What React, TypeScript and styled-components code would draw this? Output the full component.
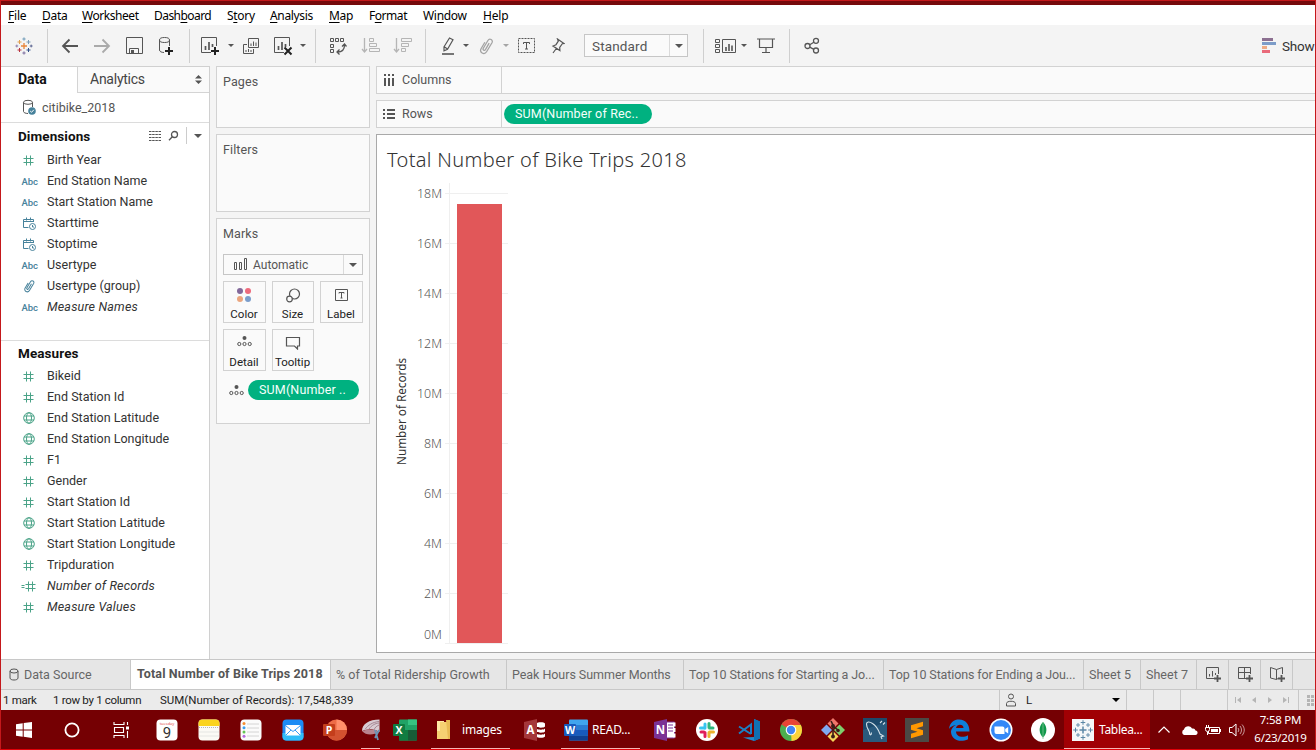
import React from "react";
import styled, { createGlobalStyle } from "styled-components";

const UI = '"Roboto", "Liberation Sans", sans-serif';
const SYS = '"Noto Sans", "Open Sans", sans-serif';

const GlobalStyle = createGlobalStyle`
  html, body { margin: 0; padding: 0; overflow: hidden; }
  * { box-sizing: border-box; }
  svg { display: block; flex: none; }
`;

/* ---------- window ---------- */
const Window = styled.div`
  width: 1316px;
  height: 750px;
  display: flex;
  flex-direction: column;
  overflow: hidden;
  background: #f4f4f4;
  border: 1px solid #c4181b;
  border-bottom-color: #e00008;
  font-family: ${UI};
  color: #333;
  white-space: nowrap;
`;
const TitleStrip = styled.div`
  height: 4px;
  flex: none;
  background: #760a0c;
`;
const MenuBar = styled.nav`
  height: 20px;
  flex: none;
  background: #fff;
  display: flex;
  align-items: center;
  padding: 1px 0 0 7px;
  font: 12px ${SYS};
  color: #000;
`;
const MenuItem = styled.span<{ $w: number; $ls?: number }>`
  width: ${(p) => p.$w}px;
  letter-spacing: ${(p) => p.$ls ?? -0.2}px;
  u { text-underline-offset: 2px; }
`;

/* ---------- toolbar ---------- */
const Toolbar = styled.div`
  height: 41px;
  flex: none;
  display: flex;
  align-items: center;
  background: #f4f4f4;
`;
const Slot = styled.div<{ $w: number; $dim?: boolean }>`
  width: ${(p) => p.$w}px;
  height: 100%;
  flex: none;
  display: flex;
  align-items: center;
  justify-content: center;
  opacity: ${(p) => (p.$dim ? 0.5 : 1)};
`;
const Separator = styled.i<{ $l: number; $r: number }>`
  width: 1px;
  height: 34px;
  flex: none;
  background: #cfcfcf;
  margin: 0 ${(p) => p.$r}px 0 ${(p) => p.$l}px;
`;
const Caret = styled.i<{ $size?: number }>`
  border: ${(p) => p.$size ?? 3}px solid transparent;
  border-top-color: #555;
  border-bottom-width: 0;
`;
const Select = styled.div<{ $h: number }>`
  height: ${(p) => p.$h}px;
  flex: none;
  display: flex;
  align-items: center;
  border: 1px solid #c6c6c6;
  background: #fafafa;
  color: #555;
`;
const FitSelect = styled(Select)`
  width: 104px;
  margin: 0 15px 0 12px;
  font-size: 13.5px;
  letter-spacing: 0.15px;
  padding: 0 0 0 7px;
`;
const SelectButton = styled.span<{ $w: number }>`
  width: ${(p) => p.$w}px;
  height: 100%;
  margin-left: auto;
  display: flex;
  align-items: center;
  justify-content: center;
  border-left: 1px solid #dadada;
`;
const ShowMe = styled.div`
  display: flex;
  flex: none;
  align-items: center;
  gap: 6px;
  margin-left: 433px;
  font-size: 13.5px;
  letter-spacing: -0.2px;
  color: #333;
`;

/* ---------- workspace ---------- */
const Workspace = styled.div`
  height: 593px;
  flex: none;
  display: flex;
`;
const DataPane = styled.aside`
  width: 209px;
  flex: none;
  background: #fff;
  border-right: 1px solid #d0d0d0;
  border-top: 1px solid #d0d0d0;
`;
const PaneTabs = styled.div`
  display: flex;
  height: 26px;
`;
const DataTab = styled.div`
  width: 76px;
  padding: 3px 0 0 17px;
  font: bold 14px/18px ${UI};
  letter-spacing: 0;
  color: #111;
`;
const AnalyticsTab = styled.div`
  flex: 1;
  display: flex;
  align-items: center;
  justify-content: space-between;
  padding: 0 7px 1px 12px;
  border-left: 1px solid #d4d4d4;
  border-bottom: 1px solid #d4d4d4;
  background: #fafafa;
  font-size: 14px;
  letter-spacing: -0.25px;
  color: #444;
`;
const DataSourceRow = styled.div`
  height: 30px;
  display: flex;
  align-items: center;
  gap: 5px;
  padding: 0 0 1px 21px;
  border-bottom: 1px solid #dcdcdc;
  font-size: 12.5px;
  color: #555;
`;
const FieldSection = styled.section<{ $h: number }>`
  height: ${(p) => p.$h}px;
  border-bottom: 1px solid #dcdcdc;
  &:last-child { border: 0; }
`;
const SectionHead = styled.header<{ $h: number }>`
  height: ${(p) => p.$h}px;
  display: flex;
  align-items: center;
  padding: 0 7px 1px 17px;
  font-size: 13.5px;
  font-weight: bold;
  letter-spacing: 0.08px;
  color: #111;
`;
const HeadTools = styled.div`
  display: flex;
  align-items: center;
  gap: 7px;
  margin-left: auto;
`;
const HeadRule = styled.i`
  width: 1px;
  height: 17px;
  background: #ccc;
`;
const Field = styled.div<{ $italic?: boolean }>`
  height: 21px;
  display: flex;
  align-items: center;
  font-size: 12.5px;
  font-style: ${(p) => (p.$italic ? "italic" : "normal")};
  letter-spacing: ${(p) => (p.$italic ? 0.18 : 0)}px;
  color: #333;
`;
const FieldIcon = styled.span`
  width: 46px;
  display: flex;
  justify-content: center;
  padding: 1px 0 0 9px;
  font: 500 9.5px ${UI};
  letter-spacing: 0;
  color: #47829b;
`;
const Cards = styled.div`
  width: 166px;
  flex: none;
  padding: 0 6px;
  display: flex;
  flex-direction: column;
  gap: 6px;
`;
const Card = styled.section<{ $h: number }>`
  height: ${(p) => p.$h}px;
  flex: none;
  background: #fafafa;
  border: 1px solid #d2d2d2;
  padding: 7px 6px;
`;
const CardTitle = styled.h2`
  margin: 0;
  font: 12.5px/15px ${UI};
  letter-spacing: 0.1px;
  color: #555;
`;
const MarkSelect = styled(Select)`
  margin-top: 13px;
  padding-left: 9px;
  gap: 6px;
  font-size: 12px;
`;
const MarkGrid = styled.div`
  display: grid;
  grid-template-columns: 43px 42px 43px;
  grid-auto-rows: 42px;
  gap: 6px;
  margin-top: 6px;
`;
const MarkButton = styled.div`
  border: 1px solid #d2d2d2;
  display: flex;
  flex-direction: column;
  align-items: center;
  justify-content: space-between;
  padding: 5px 1px 1px 0;
  font-size: 11.5px;
  line-height: 14px;
  color: #222;
`;
const Pill = styled.span<{ $w: number }>`
  width: ${(p) => p.$w}px;
  height: 20px;
  border-radius: 10px;
  background: #00b180;
  color: #f5fffb;
  font: 12.5px/20px ${UI};
  letter-spacing: 0.15px;
  padding-left: 11px;
`;
const DetailRow = styled.div`
  display: flex;
  align-items: center;
  gap: 4px;
  margin: 9px 0 0 6px;
`;
const Main = styled.main`
  flex: 1;
  min-width: 0;
  display: flex;
  flex-direction: column;
`;
const Shelf = styled.div`
  height: 28px;
  flex: none;
  margin-bottom: 6px;
  display: flex;
  align-items: center;
  background: #fafafa;
  border: 1px solid #d2d2d2;
  border-right: 0;
`;
const ShelfLabel = styled.div`
  width: 125px;
  height: 100%;
  display: flex;
  align-items: center;
  gap: 7px;
  padding: 0 0 1px 6px;
  margin-right: 2px;
  border-right: 1px solid #d2d2d2;
  font-size: 12.5px;
  color: #555;
`;
const Viz = styled.section`
  height: 519px;
  background: #fff;
  border: 1px solid #a9a9a9;
  border-right: 0;
`;
const VizTitle = styled.h1`
  margin: 0;
  height: 47px;
  padding: 11px 0 0 10px;
  font: 300 20px/28px ${SYS};
  letter-spacing: 0.32px;
  color: #333;
`;

/* ---------- bottom bars ---------- */
const SheetTabs = styled.div`
  height: 31px;
  flex: none;
  display: flex;
  background: #e6e6e6;
  border-top: 1px solid #c8c8c8;
  border-bottom: 1px solid #c8c8c8;
`;
const SheetTab = styled.div<{ $w: number; $active?: boolean; $ls?: number }>`
  width: ${(p) => p.$w}px;
  flex: none;
  display: flex;
  align-items: center;
  justify-content: flex-start;
  gap: 4px;
  padding: ${(p) => (p.$active ? "0 0 2px 6px" : "0 0 0 5px")};
  border-right: 1px solid #c8c8c8;
  background: ${(p) => (p.$active ? "#fff" : "#e6e6e6")};
  font-size: 12.5px;
  font-weight: ${(p) => (p.$active ? 700 : 400)};
  letter-spacing: ${(p) => p.$ls ?? 0.03}px;
  color: ${(p) => (p.$active ? "#555" : "#666")};
`;
const NewSheetTab = styled(SheetTab)`
  padding-left: 8px;
`;
const StatusBar = styled.div`
  height: 20px;
  flex: none;
  display: flex;
  align-items: center;
  background: #ebebeb;
  font-size: 11.5px;
  color: #222;
`;
const StatusText = styled.span<{ $w: number; $ls?: number }>`
  width: ${(p) => p.$w}px;
  flex: none;
  padding-left: 2px;
  letter-spacing: ${(p) => p.$ls ?? -0.3}px;
`;
const StatusCell = styled.div<{ $w: number }>`
  width: ${(p) => p.$w}px;
  height: 100%;
  flex: none;
  display: flex;
  align-items: center;
  padding-left: 6px;
  border-left: 1px solid #c8c8c8;
`;
const UserName = styled.span`
  flex: 1;
  padding-left: 10px;
`;
const UserCaret = styled(Caret)`
  border-top-color: #000;
  margin-right: 6px;
`;
const Taskbar = styled.footer`
  height: 39px;
  flex: none;
  display: flex;
  background: #750003;
  color: #fff;
  font: 12px ${SYS};
`;
const Task = styled.div<{ $w: number; $open?: boolean; $active?: boolean; $pad?: number }>`
  width: ${(p) => p.$w}px;
  height: 100%;
  flex: none;
  display: flex;
  align-items: center;
  justify-content: ${(p) => (p.$pad === undefined ? "center" : "flex-start")};
  padding-left: ${(p) => p.$pad ?? 0}px;
  gap: 5px;
  background: ${(p) =>
    p.$active
      ? "linear-gradient(#f3b5b5, #f3b5b5) bottom / 100% 1px no-repeat, #a00004"
      : p.$open
      ? "linear-gradient(#f3b5b5, #f3b5b5) bottom / calc(100% - 9px) 1px no-repeat"
      : "none"};
`;
const TaskLabel = styled.span<{ $ls?: number; $l?: number }>`
  margin-left: ${(p) => p.$l ?? 0}px;
  letter-spacing: ${(p) => p.$ls ?? -0.2}px;
`;
const Clock = styled.div`
  width: 65px;
  line-height: 18px;
  font-size: 11.5px;
  letter-spacing: -0.25px;
  text-align: center;
  padding-top: 1px;
`;

/* ---------- icons ---------- */
type SvgProps = { w: number; h: number; children: React.ReactNode; stroke?: string; sw?: number };
const Svg = ({ w, h, children, stroke = "#555", sw = 1 }: SvgProps) => (
  <svg width={w} height={h} viewBox={`0 0 ${w} ${h}`} fill="none" stroke={stroke} strokeWidth={sw}>
    {children}
  </svg>
);
const plus = (x: number, y: number, r: number) => `M${x - r} ${y}h${2 * r}M${x} ${y - r}v${2 * r}`;

const TableauLogo = () => (
  <Svg w={18} h={18}>
    <path d={plus(9, 9, 3)} stroke="#e8853a" strokeWidth={1.3} />
    <path d={plus(4.5, 5, 2)} stroke="#e0a050" />
    <path d={plus(13.5, 5, 2)} stroke="#7a9ab5" />
    <path d={plus(4.5, 13, 2)} stroke="#b8333f" />
    <path d={plus(13.5, 13, 2)} stroke="#33508a" />
    <path d={plus(9, 2, 1.6)} stroke="#6f9bb8" />
    <path d={plus(9, 16, 1.6)} stroke="#7b6c9e" />
    <path d={plus(1.8, 9, 1.4)} stroke="#8a7fae" />
    <path d={plus(16.2, 9, 1.4)} stroke="#5b6591" />
  </Svg>
);
const Arrow = ({ flip }: { flip?: boolean }) => (
  <Svg w={18} h={16} sw={1.8} stroke={flip ? "#aaa" : "#555"}>
    <path d={flip ? "M1 8h15M9.5 1.5l6.5 6.5l-6.5 6.5" : "M17 8H2M8.500 1.500L2 8l6.500 6.500"} />
  </Svg>
);
const Save = () => (
  <Svg w={17} h={17}>
    <path d="M.5.5h16v16H.5zM3.500 16.500v-5h9v5" />
    <path d="M5 13h3v3H5z" fill="#555" stroke="none" />
  </Svg>
);
const DbPlus = () => (
  <Svg w={16} h={20}>
    <ellipse cx="6.500" cy="4" rx="5" ry="2.500" />
    <path d="M1.500 4v10c0 1.500 2 2.500 4.500 2.500M11.500 4v6" />
    <path d={plus(11, 15, 4)} stroke="#222" strokeWidth={2} />
  </Svg>
);
const Bars = ({ mark }: { mark?: "plus" | "x" }) => (
  <Svg w={20} h={20}>
    <path d="M11 16.500H1.500v-15h15V10" />
    <path d="M5.500 10v4M9 6v8M12.500 8v3" strokeWidth={1.7} />
    {mark === "plus" && <path d={plus(15, 15, 4)} stroke="#222" strokeWidth={2} />}
    {mark === "x" && <path d="M11.500 11.500l7 7M18.500 11.500l-7 7" stroke="#222" strokeWidth={2} />}
  </Svg>
);
const Duplicate = () => (
  <Svg w={18} h={18}>
    <path d="M6.500 1.500h10v9h-10zM5 7.500H1.500v9h10V12" />
    <path d="M9 6.500V9M11.500 4.500V9M14 5.500V9M4 13v2M6.500 12v3M9 13v2" />
  </Svg>
);
const Swap = () => (
  <Svg w={18} h={18}>
    <path d="M1.500 1.500h3v3h-3zM6.500 1.500h3v3h-3zM11.500 1.500h3v3h-3zM1.500 7.500h3v3h-3zM1.500 12.500h3v3h-3z" />
    <path d="M15.500 8c0 5-3 7-7 7M13 9.500L15.500 7L17.500 9.500M10.500 12.500L8 15l2.500 2.500" strokeWidth={1.3} />
  </Svg>
);
const Sort = ({ desc }: { desc?: boolean }) => (
  <Svg w={19} h={17} stroke="#777">
    <path d="M3.500 1v14M1 12l2.500 3L6 12" strokeWidth={1.3} />
    <path d={desc ? "M8.500 1.500h10v3h-10zM8.500 6.500h7v3h-7zM8.500 11.500h4v3h-4z" : "M8.500 1.500h4v3h-4zM8.500 6.500h7v3h-7zM8.500 11.500h10v3h-10z"} />
  </Svg>
);
const Highlighter = () => (
  <Svg w={14} h={18}>
    <path d="M8.500 1l3.500 1.800-5.500 9.500-3.500 1.500v-4zM3.200 9.800l3.300 2.300" strokeWidth={1.200} />
    <path d="M1 17h12" strokeWidth={1.6} />
  </Svg>
);
const Clip = ({ color = "#555", s = 16 }: { color?: string; s?: number }) => (
  <svg width={s} height={s} viewBox="0 0 16 16" fill="none" stroke={color} strokeWidth={1.15}>
    <path d="M10.800 5.500L7.500 11.200c-.8 1.300-2.700.3-2-1l4.200-7.100c1.500-2.400 5-.5 3.600 2l-4.800 8c-2 3.300-6.800.7-4.900-2.700L7 4.700" />
  </svg>
);
const TextLabel = () => (
  <Svg w={17} h={15}>
    <path d="M.5.500h16v14H.5z" strokeDasharray="2 1" />
    <path d="M5.500 6V4.500h6V6M8.500 4.500v6.500M7 11h3" />
  </Svg>
);
const PinIcon = () => (
  <Svg w={14} h={16} sw={1.2}>
    <path d="M6.500 1l6.500 4.500-1.700.2-2.600 3.700.2 3.100L2 8l3-1.300 2.300-3.500zM5.300 10.500L2 15" />
  </Svg>
);
const ShowCards = () => (
  <Svg w={21} h={16}>
    <path d="M.5 1.500h4v3h-4zM.5 6.500h4v3h-4zM.5 11.500h4v3h-4zM7.500 1.500h13v13h-13z" />
    <path d="M11 9v4M14 6v7M17 7.500V13" strokeWidth={1.6} />
  </Svg>
);
const Present = () => (
  <Svg w={18} h={17}>
    <path d="M0 2h18M2.500 2v8.500h13V2M9 10.500v5M5 15.500h8" strokeWidth={1.2} />
  </Svg>
);
const Share = () => (
  <Svg w={16} h={17} sw={1.3}>
    <circle cx="3.500" cy="9" r="2.500" />
    <circle cx="12" cy="3.800" r="2.500" />
    <circle cx="12" cy="13.500" r="2.500" />
    <path d="M5.700 7.800l4.200-2.600M5.700 10.200l4.200 2.200" />
  </Svg>
);
const ShowMeIcon = () => (
  <Svg w={15} h={16}>
    <g stroke="none">
      <path d="M1 0h11v3H1z" fill="#8c7091" />
      <path d="M1 4h14v3H1z" fill="#7c9cc8" />
      <path d="M1 8h5v3H1z" fill="#eeaa84" />
      <path d="M1 12h8v3H1z" fill="#e96a7a" />
    </g>
  </Svg>
);
const DbCheck = () => (
  <Svg w={15} h={16}>
    <path d="M1.500 3.500v9c0 1 2 2 4.500 2M10.500 3.500V8" />
    <ellipse cx="6" cy="3.300" rx="4.500" ry="2" />
    <circle cx="10" cy="12" r="3.800" fill="#47829b" stroke="none" />
    <path d="M8.200 12l1.300 1.300 2.300-2.500" stroke="#fff" />
  </Svg>
);
const Hash = ({ calc }: { calc?: boolean }) => (
  <svg width={calc ? 18 : 11} height="11" viewBox={calc ? "-5 0 18 11" : "0 0 11 11"} fill="none" stroke="#4ba388">
    <path d="M3.500.5v10M7.500.5v10M.5 3.500h10M.5 7.500h10" />
    {calc && <path d="M-3.500 4.500h3M-3.500 6.500h3" />}
  </svg>
);
const Globe = () => (
  <Svg w={12} h={12} stroke="#4ba388">
    <circle cx="6" cy="6" r="5.300" />
    <ellipse cx="6" cy="6" rx="2.500" ry="5.300" />
    <path d="M1 4h10M1 8h10" />
  </Svg>
);
const DateTime = () => (
  <Svg w={14} h={14} stroke="#47829b">
    <path d="M6.500 11.500H1.500v-8h10V6M1.500 5.500h10M4.500 1.500v3M8.500 1.500v3" />
    <circle cx="10.500" cy="10.500" r="3" />
    <path d="M10.500 9v2H12" />
  </Svg>
);
const ListIcon = () => (
  <Svg w={12} h={10} stroke="#555">
    <path d="M0 .5h12M0 3.500h12M0 6.500h12M0 9.500h12" strokeDasharray="2.500 .667" />
  </Svg>
);
const Search = () => (
  <Svg w={11} h={11} sw={1.3}>
    <circle cx="6.500" cy="4.500" r="3" />
    <path d="M4.300 6.800L1 10.200" />
  </Svg>
);
const Dots = () => (
  <Svg w={15} h={12}>
    <circle cx="7.500" cy="3" r="2" fill="#555" stroke="none" />
    <circle cx="2.300" cy="9" r="1.600" />
    <circle cx="7.500" cy="9" r="1.600" />
    <circle cx="12.700" cy="9" r="1.600" />
  </Svg>
);
const ColorDots = () => (
  <Svg w={16} h={16}>
    <g stroke="none">
      <circle cx="4" cy="4" r="3" fill="#82689a" />
      <circle cx="12" cy="4" r="3" fill="#ee6a7c" />
      <circle cx="4" cy="12" r="3" fill="#eba57e" />
      <circle cx="12" cy="12" r="3" fill="#7b9dcb" />
    </g>
  </Svg>
);
const SizeIcon = () => (
  <Svg w={16} h={16} sw={1.2}>
    <circle cx="9.500" cy="7" r="5" />
    <circle cx="4.500" cy="12" r="2.800" fill="#fafafa" />
  </Svg>
);
const LabelIcon = () => (
  <Svg w={15} h={16}>
    <path d="M1.500 2.500h12v11h-12z" />
    <path d="M5 6.500V5.500h5v1M7.500 5.500v5.500M6.500 11h2" />
  </Svg>
);
const TooltipIcon = () => (
  <Svg w={16} h={15} sw={1.2}>
    <path d="M1.500 2.500h13v8.500h-2v3l-3-3h-8z" />
  </Svg>
);
const AutoBars = () => (
  <Svg w={14} h={13}>
    <path d="M1.500 4.500h2v7h-2zM6.500 4.500h2v7h-2zM11.500 .5h2v11h-2z" />
  </Svg>
);
const ShelfIcon = ({ rows }: { rows?: boolean }) => (
  <Svg w={12} h={12} sw={2}>
    {rows ? (
      <path d="M0 2h2M4 2h8M0 6h2M4 6h8M0 10h2M4 10h8" />
    ) : (
      <path d="M2 0v2M2 4v8M6 0v2M6 4v8M10 0v2M10 4v8" />
    )}
  </Svg>
);
const NewTab = ({ kind }: { kind: number }) => (
  <Svg w={17} h={17}>
    {kind === 0 && <path d="M9 12.500H1.500v-11h12V8M4.500 8v2.500M7.500 5v5.500M10.500 7v2" />}
    {kind === 1 && <path d="M9 12.500H1.500v-11h12V8M7.500 1.500v11M1.500 6.500h12" />}
    {kind === 2 && <path d="M9 12.500L7.500 13.500 1.500 12V1.500L7.500 3.500 13.500 1.500V8M7.500 3.500v10" />}
    <path d={plus(12.500, 12.500, 3.500)} strokeWidth={1.8} />
  </Svg>
);

const S = 24;
const App24 = ({ children }: { children: React.ReactNode }) => (
  <svg width={S} height={S} viewBox="0 0 24 24" fill="none">{children}</svg>
);
const Office = ({ letter, dark, light, kind }: { letter: string; dark: string; light: string; kind: string }) => (
  <App24>
    {kind === "round" && <><circle cx="13.500" cy="12" r="10.500" fill={light} /><path d="M13.500 1.500A10.500 10.500 0 0 1 24 12H13.500z" fill="#ff8f6b" /><path d="M3 12h21a10.500 10.500 0 0 1-21 0z" fill="#d35230" /></>}
    {kind === "grid" && <><rect x="6" y="1.500" width="18" height="21" rx="1" fill={light} /><path d="M6 12h9v10.500H6z" fill={dark} /><path d="M15 1.500h9V7h-9z" fill="#36c481" /><path d="M15 12h9v10.500h-9z" fill="#185c37" /></>}
    {kind === "rows" && <><rect x="5" y="1.500" width="19" height="21" rx="1" fill={light} /><path d="M5 7h19v5H5z" fill="#2b7cd3" /><path d="M5 12h19v5.500H5z" fill="#185abd" /><path d="M5 17.500h19v5H5z" fill="#103f91" /></>}
    {kind === "notebook" && <><path d="M13 4h8.500v16H13z" fill="#fff" stroke={dark} /><path d="M15 7h5M15 10h5M15 13h5" stroke={dark} /><path d="M20.500 4.500h2v4h-2zM20.500 10h2v4h-2zM20.500 15.500h2v4h-2z" fill="#fff" /></>}
    {kind === "database" && <path d="M13 5.500c2-1.800 8-1.800 9 0v3c-1 1.600-7 1.600-9 0zM13 10.500c2 1.600 8 1.600 9 0v3c-1 1.600-7 1.600-9 0zM13 15.500c2 1.600 8 1.600 9 0v3c-1 1.800-7 1.800-9 0z" fill="#fff" />}
    {kind === "notebook" || kind === "database" ? <path d="M1 4l13-3v22L1 20z" fill={dark} /> : <rect x="0" y="6" width="12" height="12" rx="1" fill={dark} />}
    <text x={kind === "notebook" || kind === "database" ? 7.500 : 6} y="16" textAnchor="middle" fontFamily="Open Sans" fontWeight="bold" fontSize={kind === "notebook" || kind === "database" ? 11.500 : 10.500} fill="#fff">{letter}</text>
  </App24>
);
const Tile = ({ fill, children }: { fill: string; children: React.ReactNode }) => (
  <App24><rect x="1.500" y="1.500" width="21" height="21" rx="4" fill={fill} />{children}</App24>
);
const taskIcons: Record<string, React.ReactNode> = {
  start: <Svg w={16} h={16}><path d="M0 2.300L6.700 1.300v6.200H0zM7.700 1.100L16 0v7.500H7.700zM0 8.500h6.700v6.200L0 13.700zM7.700 8.500H16V16l-8.300-1.200z" fill="#fff" stroke="none" /></Svg>,
  cortana: <Svg w={16} h={16} stroke="#fff" sw={1.800}><circle cx="8" cy="8" r="6.600" /></Svg>,
  taskview: <Svg w={17} h={16} stroke="#fff" sw={1.100}><path d="M1 0v2.500h10V0M1 16v-2.500h10V16M1.500 5.500h9v5h-9zM14.500 0v3M14.500 9v7" /><path d="M13 4.500h3v3h-3z" fill="#fff" stroke="none" /></Svg>,
  calendar: <Tile fill="#fff"><text x="12" y="6.800" textAnchor="middle" fontFamily="Open Sans" fontSize="4" fill="#e04040">tuesday</text><text x="12" y="19.500" textAnchor="middle" fontFamily="Roboto" fontSize="15" fill="#333">9</text></Tile>,
  notes: <Tile fill="#fbfaf5"><path d="M1.500 8V5.500a4 4 0 0 1 4-4h13a4 4 0 0 1 4 4V8z" fill="#fbd31d" /><path d="M2 9.500h20" stroke="#999" strokeDasharray="1 1" strokeWidth=".7" /><path d="M2 14h20M2 18h20" stroke="#ddd" strokeWidth=".7" /></Tile>,
  reminders: <Tile fill="#fbfbfb"><path d="M8 6h12M8 10h12M8 14h12M8 18h12" stroke="#ccc" strokeWidth=".8" /><circle cx="5" cy="5.500" r="1.500" fill="#f58c2e" /><circle cx="5" cy="9.700" r="1.500" fill="#3a9ff0" /><circle cx="5" cy="14" r="1.500" fill="#62c554" /><circle cx="5" cy="18.300" r="1.500" fill="#b469dd" /></Tile>,
  mail: <Tile fill="#1c8cf5"><path d="M1.500 15h21v3.500a4 4 0 0 1-4 4h-13a4 4 0 0 1-4-4z" fill="#30bdf8" /><rect x="4.500" y="7" width="15" height="10.500" rx="1.500" fill="#fff" /><path d="M5 8l7 5.500L19 8M5 17l5-5M19 17l-5-5" stroke="#3a9df5" /></Tile>,
  ppt: <Office letter="P" dark="#c43e1c" light="#ed6c47" kind="round" />,
  snip: <svg width="19" height="24" viewBox="0 0 19 24" fill="none"><path d="M1 13C1 6 8 1.500 18.500 1.500V14C12 10 7 11 1 13z" fill="#d9cbd3" /><path d="M4 11.500C7 7 12 4 18 3.500M8 11c3-4 6-5.500 10-6M13 12c1-3 3-4 5-5" stroke="#a58491" /><path d="M1 13c5-2 11-2.500 17 1-5 3-13 4-17-1z" fill="#b9848f" /><path d="M14 12l3 10M18 12l-4 8" stroke="#6b93b5" strokeWidth="1.800" /></svg>,
  excel: <Office letter="X" dark="#107c41" light="#21a366" kind="grid" />,
  folder: <svg width="16" height="22" viewBox="0 0 16 22"><path d="M1 2h7v18H1z" fill="#ffe9a5" /><path d="M4 3h10v17H1V12h3z" fill="#f6d172" /><path d="M10 1h4v19h-2z" fill="#e9bb53" /></svg>,
  access: <Office letter="A" dark="#a4373a" light="#fff" kind="database" />,
  word: <Office letter="W" dark="#185abd" light="#41a5ee" kind="rows" />,
  onenote: <Office letter="N" dark="#7b3294" light="#fff" kind="notebook" />,
  slack: <App24><circle cx="12" cy="12" r="11" fill="#fff" /><g strokeWidth="3" strokeLinecap="round"><path d="M10 6v4" stroke="#36c5f0" /><path d="M5.500 10h4" stroke="#36c5f0" /><path d="M14 5.500v4M14.500 10h3.500" stroke="#2eb67d" /><path d="M14.500 14h4M14 14.500v4" stroke="#ecb22e" /><path d="M10 14.500v4M6 14h3" stroke="#e01e5a" /></g></App24>,
  vscode: <App24><path d="M17 1l6 2.500v17L17 23 6 19.500l11-.5z" fill="#2489ca" /><path d="M17 1l6 2.500v17L17 23z" fill="#1070b3" /><path d="M2 8.500l12 7.500M2 15.500L14 6.500v9.500" stroke="#1b7fc4" strokeWidth="2" /></App24>,
  chrome: <App24><circle cx="12" cy="12" r="11" fill="#4caf50" /><path d="M12 12L2.500 6.500A11 11 0 0 1 21.500 6.500z" fill="#e94435" /><path d="M12 12V7h9.800A11 11 0 0 1 12.500 23z" fill="#fdd33b" /><circle cx="12" cy="12" r="5.300" fill="#fff" /><circle cx="12" cy="12" r="4.200" fill="#4285f4" /></App24>,
  git: <App24><path d="M12 0l5.500 5.500L12 11 6.500 5.500z" fill="#f0766a" /><path d="M5.500 6.500L11 12l-5.500 5.500L0 12z" fill="#80a8f0" /><path d="M18.500 6.500L24 12l-5.500 5.500L13 12z" fill="#7fd06d" /><path d="M12 13l5.500 5.500L12 24l-5.500-5.500z" fill="#f5d35a" /><path d="M10 3l2 4v11M12 8l5 4" stroke="#3b1d18" strokeWidth="1.600" /><circle cx="12" cy="18.500" r="1.900" fill="#3b1d18" /><circle cx="12" cy="8" r="2" fill="#3b1d18" /><circle cx="17" cy="12.500" r="1.800" fill="#3b1d18" /></App24>,
  mysql: <App24><path d="M0 0h24v24H0z" fill="#1c4a6c" /><path d="M0 12L24 4v20H0z" fill="#295a7d" /><path d="M8 17c-1 0-1.500-1-1.500-2.500C6 12 3.500 10 3.500 6c0-2.500 3-2.500 6-.5 4 2.500 6 6.500 7.500 10.500l3.500 2-2.500.8 1 2.200M8 17l.5-2.500M17 5l2-2M20 6.500l2-2" stroke="#d5e2ea" strokeWidth="1.100" /></App24>,
  sublime: <App24><path d="M0 0h24v24H0z" fill="#4b4945" /><path d="M6 8l12-3.500v4.500L11.500 11l6.500 2v4.500L6 21v-4.500l6.500-2L6 12.500z" transform="translate(0 -.7)" fill="#ff9800" /></App24>,
  edge: <App24><path d="M2 11C3 4 7 1.500 12 1.500c7 0 10.500 5 10.500 12H9c.3 6 7.500 6.500 12 3.800v4C13 25 4.500 22 4 14c0-3 2.500-6 5-7-3 .5-6 2-7 4zm7-1h7.500c0-4-6.500-4.500-7.500 0z" fill="#0f7fda" /></App24>,
  zoom: <App24><circle cx="12" cy="12" r="11.500" fill="#fff" /><circle cx="12" cy="12" r="10" fill="#3488f7" /><path d="M5.500 8.500h8a2 2 0 0 1 2 2v5.500h-8a2 2 0 0 1-2-2zM16.200 11l3-2v6.500l-3-2z" fill="#fff" /></App24>,
  mongo: <App24><circle cx="12" cy="12" r="12" fill="#fff" /><path d="M12 4c5 5 4 12 0 15.500C8 16 7 9 12 4z" fill="#11984b" /><path d="M12 4v17" stroke="#7fc796" strokeWidth=".8" /></App24>,
  tableau: <svg width="22" height="22" viewBox="0 0 22 22" fill="none" stroke="#5b87a6"><path d="M0 0h22v22H0z" fill="#f5f7f9" stroke="none" /><path d={plus(11, 11, 3.500)} strokeWidth="1.500" /><path d={plus(11, 3.500, 2.300) + plus(11, 18.500, 2.300) + plus(3.500, 11, 2.300) + plus(18.500, 11, 2.300)} /><path d={plus(6, 6, 2) + plus(16, 6, 2) + plus(6, 16, 2) + plus(16, 16, 2)} strokeWidth=".9" /></svg>,
};
const pinned = ["calendar", "notes", "reminders", "mail", "ppt"];
const apps = ["onenote", "slack", "vscode", "chrome", "git", "mysql", "sublime", "edge", "zoom", "mongo"];

/* ---------- data ---------- */
type FieldDef = [kind: string, name: string, italic?: boolean];
const dimensions: FieldDef[] = [
  ["num", "Birth Year"], ["abc", "End Station Name"], ["abc", "Start Station Name"],
  ["date", "Starttime"], ["date", "Stoptime"], ["abc", "Usertype"],
  ["group", "Usertype (group)"], ["abc", "Measure Names", true],
];
const measures: FieldDef[] = [
  ["num", "Bikeid"], ["num", "End Station Id"], ["geo", "End Station Latitude"],
  ["geo", "End Station Longitude"], ["num", "F1"], ["num", "Gender"],
  ["num", "Start Station Id"], ["geo", "Start Station Latitude"], ["geo", "Start Station Longitude"],
  ["num", "Tripduration"], ["calc", "Number of Records", true], ["num", "Measure Values", true],
];
const fieldGlyph: Record<string, React.ReactNode> = {
  num: <Hash />, calc: <Hash calc />, geo: <Globe />, date: <DateTime />,
  abc: <>&nbsp;Abc</>, group: <Clip color="#47829b" s={14} />,
};
const FieldList = ({ items }: { items: FieldDef[] }) => (
  <>
    {items.map(([kind, name, italic]) => (
      <Field key={name} $italic={italic}>
        <FieldIcon>{fieldGlyph[kind]}</FieldIcon>
        {name}
      </Field>
    ))}
  </>
);

const ticks = [18, 16, 14, 12, 10, 8, 6, 4, 2, 0];
const Chart = () => (
  <svg width="160" height="468" viewBox="377 182 160 468" fontFamily="Noto Sans" fontWeight="300">
    {ticks.map((t) => {
      const y = 643 - t * 25;
      return (
        <g key={t}>
          <path d={`M445 ${y + 0.5}H508`} stroke="#efefef" />
          <text x="442" y={(t ? y : 634) + 4.500} textAnchor="end" fontSize="12.500" fill="#555"
            textLength={t > 9 ? 25 : 18} lengthAdjust="spacingAndGlyphs">{t}M</text>
        </g>
      );
    })}
    <path d="M449.500 183V643" stroke="#efefef" />
    <rect x="457" y="204" width="45" height="439" fill="#e15759" />
    <text transform="translate(406 465) rotate(-90)" fontSize="12" fontWeight="400" fill="#333"
      textLength="107" lengthAdjust="spacingAndGlyphs">Number of Records</text>
  </svg>
);

export default function App() {
  return (
    <Window>
      <GlobalStyle />
      <TitleStrip />
      <MenuBar>
        <MenuItem $w={34}><u>F</u>ile</MenuItem>
        <MenuItem $w={40} $ls={-0.3}><u>D</u>ata</MenuItem>
        <MenuItem $w={72} $ls={-0.45}><u>W</u>orksheet</MenuItem>
        <MenuItem $w={73} $ls={-0.55}>Dash<u>b</u>oard</MenuItem>
        <MenuItem $w={43} $ls={-0.3}>S<u>t</u>ory</MenuItem>
        <MenuItem $w={59} $ls={-0.35}><u>A</u>nalysis</MenuItem>
        <MenuItem $w={40} $ls={-0.3}><u>M</u>ap</MenuItem>
        <MenuItem $w={54} $ls={-0.45}>F<u>o</u>rmat</MenuItem>
        <MenuItem $w={60} $ls={-0.3}>Wi<u>n</u>dow</MenuItem>
        <MenuItem $w={40}><u>H</u>elp</MenuItem>
      </MenuBar>
      <Toolbar>
        <Slot $w={45}><TableauLogo /></Slot>
        <Separator $l={1} $r={6} />
        <Slot $w={32}><Arrow /></Slot>
        <Slot $w={32}><Arrow flip /></Slot>
        <Slot $w={32}><Save /></Slot>
        <Slot $w={32}><DbPlus /></Slot>
        <Separator $l={7} $r={4} />
        <Slot $w={32}><Bars mark="plus" /></Slot>
        <Slot $w={9}><Caret /></Slot>
        <Slot $w={32}><Duplicate /></Slot>
        <Slot $w={31}><Bars mark="x" /></Slot>
        <Slot $w={9}><Caret /></Slot>
        <Separator $l={8} $r={5} />
        <Slot $w={33}><Swap /></Slot>
        <Slot $w={32} $dim><Sort /></Slot>
        <Slot $w={32} $dim><Sort desc /></Slot>
        <Separator $l={7} $r={8} />
        <Slot $w={27}><Highlighter /></Slot>
        <Slot $w={9}><Caret /></Slot>
        <Slot $w={31} $dim><Clip s={18} /></Slot>
        <Slot $w={9} $dim><Caret /></Slot>
        <Slot $w={33}><TextLabel /></Slot>
        <Slot $w={29}><PinIcon /></Slot>
        <FitSelect $h={23}>Standard<SelectButton $w={18}><Caret $size={4} /></SelectButton></FitSelect>
        <Separator $l={0} $r={8} />
        <Slot $w={27}><ShowCards /></Slot>
        <Slot $w={9}><Caret /></Slot>
        <Slot $w={36}><Present /></Slot>
        <Separator $l={5} $r={6} />
        <Slot $w={32}><Share /></Slot>
        <ShowMe><ShowMeIcon />Show</ShowMe>
      </Toolbar>

      <Workspace>
        <DataPane>
          <PaneTabs>
            <DataTab>Data</DataTab>
            <AnalyticsTab>
              Analytics
              <Svg w={7} h={9}><path d="M3.500 0L7 3.500H0zM3.500 9L7 5.500H0z" fill="#555" stroke="none" /></Svg>
            </AnalyticsTab>
          </PaneTabs>
          <DataSourceRow><DbCheck />citibike_2018</DataSourceRow>
          <FieldSection $h={218}>
            <SectionHead $h={26}>
              Dimensions
              <HeadTools><ListIcon /><Search /><HeadRule /><Caret $size={4} /></HeadTools>
            </SectionHead>
            <FieldList items={dimensions} />
          </FieldSection>
          <FieldSection $h={317}>
            <SectionHead $h={24}>Measures</SectionHead>
            <FieldList items={measures} />
          </FieldSection>
        </DataPane>

        <Cards>
          <Card $h={62}><CardTitle>Pages</CardTitle></Card>
          <Card $h={78}><CardTitle>Filters</CardTitle></Card>
          <Card $h={206}>
            <CardTitle>Marks</CardTitle>
            <MarkSelect $h={21}><AutoBars />Automatic<SelectButton $w={19}><Caret $size={4} /></SelectButton></MarkSelect>
            <MarkGrid>
              <MarkButton><ColorDots />Color</MarkButton>
              <MarkButton><SizeIcon />Size</MarkButton>
              <MarkButton><LabelIcon />Label</MarkButton>
              <MarkButton><Dots />Detail</MarkButton>
              <MarkButton><TooltipIcon />Tooltip</MarkButton>
            </MarkGrid>
            <DetailRow><Dots /><Pill $w={111}>SUM(Number ..</Pill></DetailRow>
          </Card>
        </Cards>

        <Main>
          <Shelf><ShelfLabel><ShelfIcon />Columns</ShelfLabel></Shelf>
          <Shelf><ShelfLabel><ShelfIcon rows />Rows</ShelfLabel><Pill $w={148}>SUM(Number of Rec..</Pill></Shelf>
          <Viz>
            <VizTitle>Total Number of Bike Trips 2018</VizTitle>
            <Chart />
          </Viz>
        </Main>
      </Workspace>

      <SheetTabs>
        <SheetTab $w={130} $ls={0}>
          <Svg w={14} h={13}><ellipse cx="8" cy="3" rx="4" ry="2" /><path d="M4 3v7c0 2.700 8 2.700 8 0V3" /></Svg>
          Data Source
        </SheetTab>
        <SheetTab $w={200} $active $ls={0.13}>Total Number of Bike Trips 2018</SheetTab>
        <SheetTab $w={176}>% of Total Ridership Growth</SheetTab>
        <SheetTab $w={177} $ls={-0.05}>Peak Hours Summer Months</SheetTab>
        <SheetTab $w={200} $ls={-0.12}>Top 10 Stations for Starting a Jo...</SheetTab>
        <SheetTab $w={200} $ls={-0.13}>Top 10 Stations for Ending a Jou...</SheetTab>
        <SheetTab $w={57}>Sheet 5</SheetTab>
        <SheetTab $w={56}>Sheet 7</SheetTab>
        {[0, 1, 2].map((k) => (
          <NewSheetTab key={k} $w={32}><NewTab kind={k} /></NewSheetTab>
        ))}
      </SheetTabs>
      <StatusBar>
        <StatusText $w={50}>1 mark</StatusText>
        <StatusText $w={107}>1 row by 1 column</StatusText>
        <StatusText $w={841} $ls={0}>SUM(Number of Records): 17,548,339</StatusText>
        <StatusCell $w={127}>
          <Svg w={10} h={14}><circle cx="5" cy="3.500" r="2.500" /><path d="M.5 13V10.500c0-3 9-3 9 0V13z" /></Svg>
          <UserName>L</UserName>
          <UserCaret $size={4} />
        </StatusCell>
        <StatusCell $w={27} />
        <StatusCell $w={27} />
        <StatusCell $w={47} />
        <StatusCell $w={71}>
          <svg width="56" height="8" viewBox="0 0 56 8" fill="#b5b5b5">
            <path d="M1 1h1v6H1zM7 1v6L3 4zM22 1v6l-4-3zM34 1v6l4-3zM49 1v6l4-3zM54 1h1v6h-1z" />
          </svg>
        </StatusCell>
        <StatusCell $w={30}>
          <svg width="11" height="11" viewBox="-2 0 11 11" fill="#b5b5b5">
            <path d="M0 0h3v3H0zM4 0h3v3H4zM8 0h3v3H8zM0 4h3v3H0zM4 4h3v3H4zM8 4h3v3H8zM0 8h3v3H0zM4 8h3v3H4zM8 8h3v3H8z" />
          </svg>
        </StatusCell>
      </StatusBar>

      <Taskbar>
        <Task $w={46}>{taskIcons.start}</Task>
        <Task $w={50}>{taskIcons.cortana}</Task>
        <Task $w={49}>{taskIcons.taskview}</Task>
        {pinned.map((k) => <Task key={k} $w={42}>{taskIcons[k]}</Task>)}
        <Task $w={28} $open>{taskIcons.snip}</Task>
        <Task $w={42}>{taskIcons.excel}</Task>
        <Task $w={88} $open $pad={10}>{taskIcons.folder}<TaskLabel $l={5}>images</TaskLabel></Task>
        <Task $w={42}>{taskIcons.access}</Task>
        <Task $w={88} $open $pad={8}>{taskIcons.word}<TaskLabel $l={-1}>READ...</TaskLabel></Task>
        {apps.map((k) => <Task key={k} $w={42}>{taskIcons[k]}</Task>)}
        <Task $w={86} $active $pad={8}>{taskIcons.tableau}<TaskLabel $ls={-0.3}>Tablea...</TaskLabel></Task>
        <Task $w={28}><Svg w={12} h={8} stroke="#fff" sw={1.200}><path d="M.5 6.500L6 1l5.500 5.500" /></Svg></Task>
        <Task $w={22}><Svg w={17} h={10}><path d="M3 10a3 3 0 0 1 0-5.500C4 1 9 0 11 3.500c3-.5 3 1.500 3.500 2 3 .5 2.500 4.500 0 4.500z" fill="#fff" stroke="none" /></Svg></Task>
        <Task $w={25}><Svg w={17} h={12} stroke="#fff"><path d="M5 3.500h10.500v6H4.500V7M3.500 8v3M1.500 3.500h4v2a2 2 0 0 1-4 0zM2.500 1v2M4.500 1v2" /><path d="M7 5h7v3H7zM16 5h1v3h-1z" fill="#fff" stroke="none" /></Svg></Task>
        <Task $w={23}><Svg w={16} h={14} stroke="#fff"><path d="M.5 4.500h2.500l4-3.500v12l-4-3.500H.5z" /><path d="M9 5c1 1.300 1 2.700 0 4M11 3c2 2.500 2 5.500 0 8M13 1.500c3 3.500 3 7.500 0 11" opacity=".6" /></Svg></Task>
        <Clock>7:58 PM<br />6/23/2019</Clock>
      </Taskbar>
    </Window>
  );
}
